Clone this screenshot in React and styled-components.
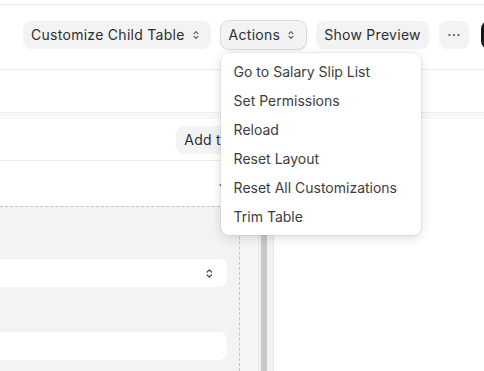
import React from 'react';
import styled, { createGlobalStyle } from 'styled-components';

const GlobalStyle = createGlobalStyle`
  html, body {
    margin: 0;
    padding: 0;
    background: #ffffff;
  }
  body {
    font-family: Inter, 'Noto Sans', sans-serif;
    color: #383838;
    -webkit-font-smoothing: antialiased;
  }
`;

function UpDown({ size = 12, color = '#5c5c5c' }) {
  return (
    <svg width={size * 0.66} height={size} viewBox="0 0 8 12" fill="none">
      <path d="M2 4.6 L4 2.6 L6 4.6" stroke={color} strokeWidth="1.2" strokeLinecap="round" strokeLinejoin="round" />
      <path d="M2 7.4 L4 9.4 L6 7.4" stroke={color} strokeWidth="1.2" strokeLinecap="round" strokeLinejoin="round" />
    </svg>
  );
}

function Dots({ color = '#525252' }) {
  return (
    <svg width="12" height="4" viewBox="0 0 12 4" fill={color}>
      <circle cx="1.5" cy="2" r="1.1" />
      <circle cx="6" cy="2" r="1.1" />
      <circle cx="10.5" cy="2" r="1.1" />
    </svg>
  );
}

const menuItems = [
  'Go to Salary Slip List',
  'Set Permissions',
  'Reload',
  'Reset Layout',
  'Reset All Customizations',
  'Trim Table',
];

export default function App() {
  return (
    <>
      <GlobalStyle />
      <Page>
        <TopRule />
        <Toolbar>
          <Button>
            Customize Child Table
            <UpDown />
          </Button>
          <MenuAnchor>
            <Button $active>
              Actions
              <UpDown />
            </Button>
            <Menu>
              {menuItems.map(item => (
                <MenuItem key={item}>{item}</MenuItem>
              ))}
            </Menu>
          </MenuAnchor>
          <Button>Show Preview</Button>
          <IconButton>
            <Dots />
          </IconButton>
          <PrimaryButton>Save</PrimaryButton>
        </Toolbar>
        <SubBar />
        <Body>
          <LeftPanel>
            <TabHeader>
              <Button>Add tab</Button>
            </TabHeader>
            <SectionHeader>
              <Dots color="#6b6b6b" />
            </SectionHeader>
            <ColumnArea>
              <DashedColumn>
                <Field>
                  <UpDown size={13} color="#4a4a4a" />
                </Field>
                <Field />
              </DashedColumn>
            </ColumnArea>
          </LeftPanel>
          <Scrollbar>
            <Thumb />
          </Scrollbar>
          <RightPanel />
        </Body>
      </Page>
    </>
  );
}

const Page = styled.div`
  display: flex;
  flex-direction: column;
  width: 484px;
  height: 371px;
  overflow: hidden;
  position: relative;
`;

const TopRule = styled.div`
  height: 4px;
  flex-shrink: 0;
  border-bottom: 1px solid #ededed;
`;

const Toolbar = styled.div`
  display: flex;
  align-items: flex-start;
  gap: 10px;
  height: 65px;
  flex-shrink: 0;
  padding: 16px 0 0 23px;
  box-sizing: border-box;
  border-bottom: 1px solid #ededed;
  white-space: nowrap;
`;

const Button = styled.button`
  display: inline-flex;
  align-items: center;
  gap: 7px;
  height: 28px;
  padding: 0 8px;
  border: none;
  border-radius: 8px;
  background: #f3f3f3;
  color: #2e2e2e;
  font-family: Inter, sans-serif;
  font-size: 14px;
  letter-spacing: 0.02em;
  line-height: 1;
  white-space: nowrap;
  flex-shrink: 0;
  box-shadow: ${p => (p.$active ? '0 0 0 1px #dadada, 0 1px 3px rgba(0, 0, 0, 0.12)' : 'none')};
  svg {
    margin-right: 3px;
  }
`;

const IconButton = styled(Button)`
  width: 30px;
  justify-content: center;
  padding: 0;
  svg {
    margin: 0;
  }
`;

const PrimaryButton = styled(Button)`
  margin-left: 2px;
  background: #171717;
  color: #ffffff;
`;

const MenuAnchor = styled.div`
  position: relative;
  flex-shrink: 0;
`;

const Menu = styled.div`
  position: absolute;
  top: 32px;
  left: 0;
  z-index: 10;
  width: 200px;
  padding: 4px 5px;
  box-sizing: border-box;
  background: #ffffff;
  border-radius: 8px;
  box-shadow: 0 0 0 1px rgba(0, 0, 0, 0.05), 0 3px 12px rgba(0, 0, 0, 0.14);
`;

const MenuItem = styled.div`
  display: flex;
  align-items: center;
  height: 29px;
  padding-left: 8px;
  font-size: 14px;
  color: #3d3d3d;
  border-radius: 6px;
  white-space: nowrap;
`;

const SubBar = styled.div`
  height: 42px;
  flex-shrink: 0;
  border-bottom: 1px solid #ededed;
`;

const Body = styled.div`
  display: flex;
  flex: 1;
  min-height: 0;
  padding-top: 6px;
  background: #f8f8f8;
`;

const LeftPanel = styled.div`
  display: flex;
  flex-direction: column;
  width: 258px;
  flex-shrink: 0;
  overflow: hidden;
  background: #ffffff;
`;

const TabHeader = styled.div`
  display: flex;
  align-items: center;
  justify-content: flex-end;
  height: 41px;
  padding-right: 12px;
  flex-shrink: 0;
  border-bottom: 1px solid #ededed;
`;

const SectionHeader = styled.div`
  display: flex;
  align-items: center;
  height: 45px;
  padding-left: 219px;
  padding-top: 3px;
  box-sizing: border-box;
  flex-shrink: 0;
`;

const ColumnArea = styled.div`
  flex: 1;
  background: #f6f6f6;
`;

const DashedColumn = styled.div`
  display: flex;
  flex-direction: column;
  gap: 45px;
  width: 240px;
  height: 100%;
  padding: 52px 12px 0 0;
  box-sizing: border-box;
  background: #f3f3f3;
  border-top: 1px dashed #c4c4c4;
  border-right: 1px dashed #c4c4c4;
`;

const Field = styled.div`
  display: flex;
  align-items: center;
  justify-content: flex-end;
  height: 28px;
  margin-left: -12px;
  padding-right: 13px;
  background: #ffffff;
  border-radius: 8px;
`;

const Scrollbar = styled.div`
  display: flex;
  width: 16px;
  flex-shrink: 0;
  box-sizing: border-box;
  padding-left: 2px;
  background: #f2f2f2;
  border-left: 1px solid #e9e9e9;
  border-right: 1px solid #e6e6e6;
`;

const Thumb = styled.div`
  width: 6px;
  margin-top: 60px;
  background: #c8c8c8;
`;

const RightPanel = styled.div`
  flex: 1;
  background: #ffffff;
`;
